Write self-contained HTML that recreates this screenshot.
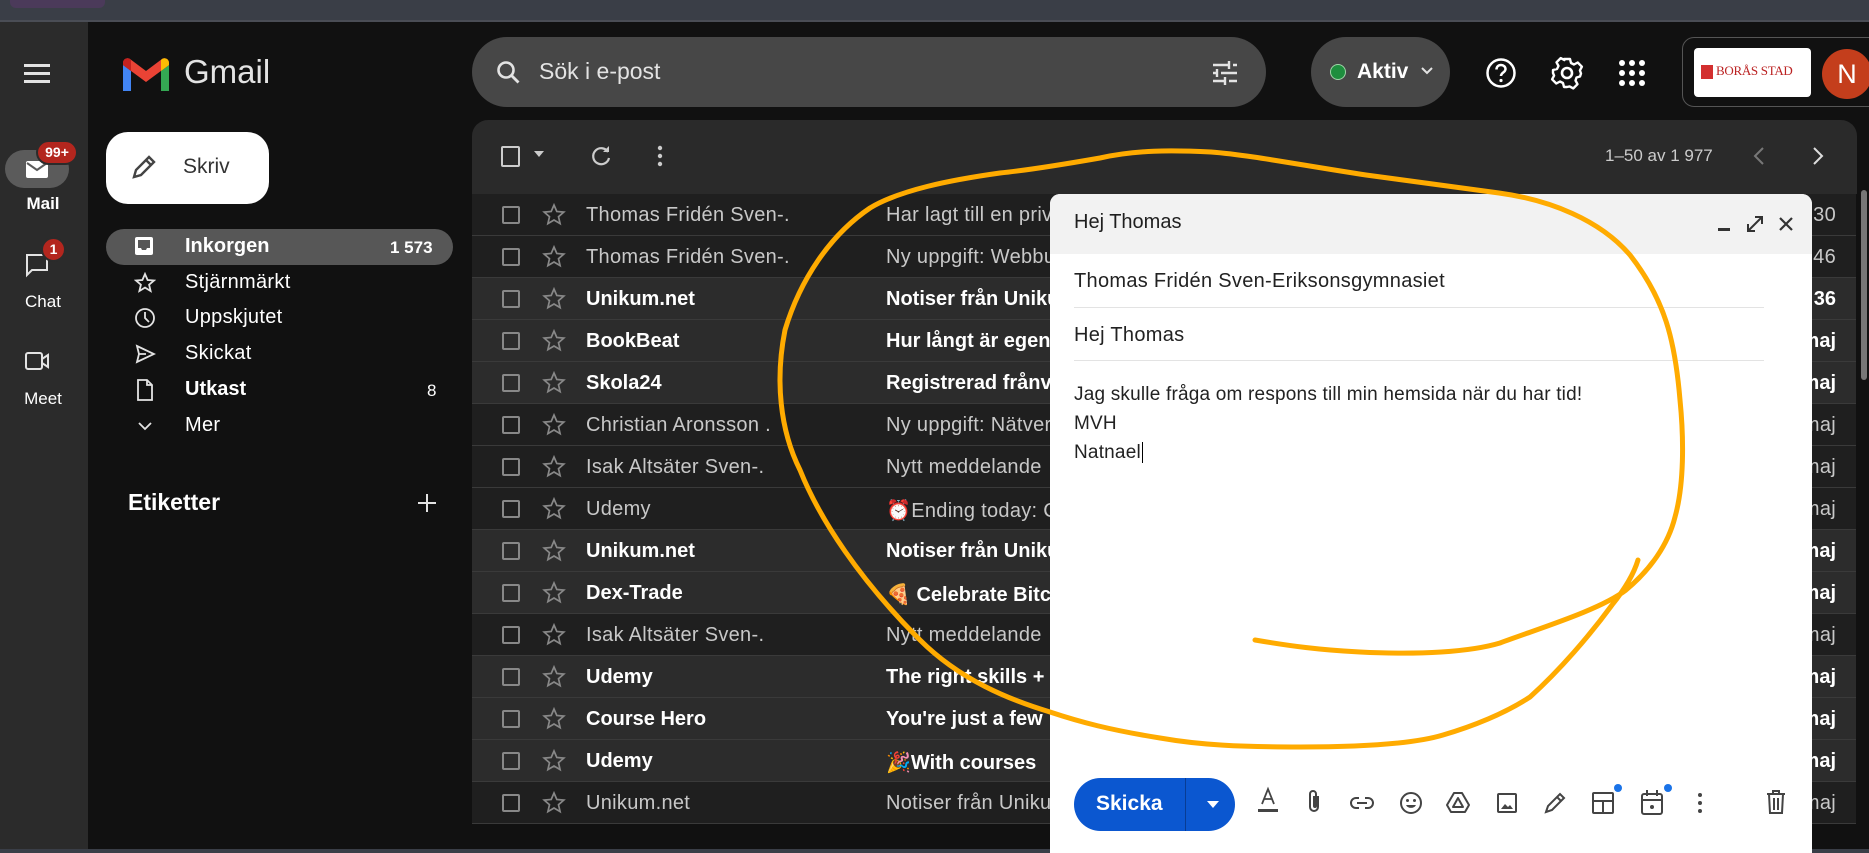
<!DOCTYPE html>
<html><head><meta charset="utf-8"><style>
*{box-sizing:border-box;margin:0;padding:0}
body{width:1869px;height:853px;background:#111;font-family:"Liberation Sans","Noto Sans CJK SC",sans-serif;color:#e3e3e3;position:relative;overflow:hidden}
.a{position:absolute}
.top{left:0;top:0;width:1869px;height:22px;background:#3a3e47;border-bottom:2px solid #4a4d55}
.rail{left:0;top:22px;width:88px;height:831px;background:#2b2b2b}
.rl{width:88px;text-align:center;font-size:17px;color:#fff}
.nav{font-size:20px;color:#fff;left:185px;letter-spacing:0.3px}
.ic{left:134px;width:22px;height:22px}
.row{left:472px;width:1384px;height:42px;border-bottom:1px solid #3a3a3a;font-size:20px;color:#c8c8c8;letter-spacing:0.3px}
.row.u{background:#2c2c2c;color:#fff;font-weight:bold;letter-spacing:0}
.row.r{background:#1f1f1f}
.cb{position:absolute;left:30px;top:12px;width:18px;height:18px;border:2px solid #888;border-radius:2px}
.st{position:absolute;left:70px;top:9px}
.snd{position:absolute;left:114px;top:10px;white-space:nowrap}
.sub{position:absolute;left:414px;top:10px;white-space:nowrap}
.dt{position:absolute;right:20px;top:10px}
.tb svg{position:absolute}
</style></head><body>
<div class="a top"></div>
<div class="a" style="left:10px;top:0;width:95px;height:8px;background:#4b3a5a;border-radius:0 0 6px 6px"></div>
<div class="a rail"></div>
<svg class="a" style="left:24px;top:62px" width="28" height="22"><rect y="2" width="26" height="3" fill="#e3e3e3"/><rect y="10" width="26" height="3" fill="#e3e3e3"/><rect y="18" width="26" height="3" fill="#e3e3e3"/></svg>
<div class="a" style="left:5px;top:150px;width:64px;height:38px;border-radius:19px;background:#5b5b5b"></div>
<svg class="a" style="left:25px;top:160px" width="24" height="20"><rect x="1" y="1" width="22" height="17" rx="2" fill="#fff"/><path d="M2 3l10 7 10-7" stroke="#5b5b5b" stroke-width="2" fill="none"/></svg>
<div class="a" style="left:36px;top:140px;width:42px;height:25px;border-radius:13px;background:#b3261e;border:2px solid #2b2b2b;color:#fff;font-size:14px;font-weight:bold;text-align:center;line-height:21px">99+</div>
<div class="a rl" style="left:-1px;top:194px;font-weight:bold">Mail</div>
<svg class="a" style="left:25px;top:253px" width="26" height="26"><path d="M2 2h20v15H7l-5 5z" fill="none" stroke="#e3e3e3" stroke-width="2"/></svg>
<div class="a" style="left:41px;top:237px;width:25px;height:25px;border-radius:13px;background:#b3261e;border:2px solid #2b2b2b;color:#fff;font-size:14px;font-weight:bold;text-align:center;line-height:21px">1</div>
<div class="a rl" style="left:-1px;top:292px">Chat</div>
<svg class="a" style="left:24px;top:350px" width="28" height="22"><rect x="2" y="3" width="16" height="16" rx="2" fill="none" stroke="#e3e3e3" stroke-width="2"/><path d="M18 9l6-4v12l-6-4" fill="none" stroke="#e3e3e3" stroke-width="2"/></svg>
<div class="a rl" style="left:-1px;top:389px">Meet</div>

<svg class="a" style="left:121px;top:57px" width="50" height="36" viewBox="0 0 50 36"><path d="M2 34h8V14L2 8z" fill="#4285f4"/><path d="M40 34h8V8l-8 6z" fill="#34a853"/><path d="M2 8l23 17L48 8v-2c0-4-4-6-7-4L25 14 9 2C6 0 2 2 2 6z" fill="#ea4335"/><path d="M40 14l8-6V6c0-4-4-6-7-4l-1 1z" fill="#fbbc04"/><path d="M2 8V6c0-4 4-6 7-4l1 1v11z" fill="#c5221f"/></svg>
<div class="a" style="left:184px;top:53px;font-size:33px;color:#e3e3e3">Gmail</div>

<div class="a" style="left:106px;top:132px;width:163px;height:72px;background:#fff;border-radius:22px"></div>
<svg class="a" style="left:129px;top:152px" width="30" height="30"><path d="M5 25l2-7L20 5l5 5L12 23z M17 8l5 5" fill="none" stroke="#444" stroke-width="2.4"/></svg>
<div class="a" style="left:183px;top:155px;font-size:21px;color:#333">Skriv</div>

<div class="a" style="left:106px;top:229px;width:347px;height:36px;background:#575757;border-radius:18px"></div>
<svg class="a ic" style="top:236px"><rect x="1" y="1" width="18" height="18" rx="2" fill="#fff"/><path d="M4 4h12v8h-3l-1 2h-4l-1-2H4z" fill="#575757"/></svg>
<div class="a nav" style="top:235px;font-weight:bold;letter-spacing:0">Inkorgen</div>
<div class="a" style="left:390px;top:238px;font-size:17px;font-weight:bold;color:#fff">1 573</div>
<svg class="a ic" style="top:272px"><path d="M11 2l2.6 6 6.4.5-4.9 4.2 1.5 6.3L11 15.6 5.4 19l1.5-6.3L2 8.5 8.4 8z" fill="none" stroke="#e3e3e3" stroke-width="1.8"/></svg>
<div class="a nav" style="top:271px">Stjärnmärkt</div>
<svg class="a ic" style="top:307px"><circle cx="11" cy="11" r="9" fill="none" stroke="#e3e3e3" stroke-width="1.8"/><path d="M11 5v6l4 4" fill="none" stroke="#e3e3e3" stroke-width="1.8"/></svg>
<div class="a nav" style="top:306px">Uppskjutet</div>
<svg class="a ic" style="top:343px"><path d="M3 3l17 8-17 8 2-8z M5 11h7" fill="none" stroke="#e3e3e3" stroke-width="1.8"/></svg>
<div class="a nav" style="top:342px">Skickat</div>
<svg class="a ic" style="top:379px"><path d="M4 1h9l5 5v15H4z M13 1v5h5" fill="none" stroke="#e3e3e3" stroke-width="1.8"/></svg>
<div class="a nav" style="top:378px;font-weight:bold;letter-spacing:0">Utkast</div>
<div class="a" style="left:427px;top:381px;font-size:17px;color:#fff">8</div>
<svg class="a ic" style="top:415px"><path d="M5 8l6 6 6-6" fill="none" stroke="#e3e3e3" stroke-width="1.8"/></svg>
<div class="a nav" style="top:414px">Mer</div>
<div class="a" style="left:128px;top:489px;font-size:23px;color:#fff;font-weight:bold">Etiketter</div>
<svg class="a" style="left:416px;top:492px" width="22" height="22"><path d="M11 2v18M2 11h18" stroke="#e3e3e3" stroke-width="2"/></svg>

<div class="a" style="left:472px;top:37px;width:794px;height:70px;background:#474747;border-radius:35px"></div>
<svg class="a" style="left:495px;top:59px" width="28" height="28"><circle cx="11" cy="11" r="7.5" fill="none" stroke="#e3e3e3" stroke-width="2.6"/><path d="M16.5 16.5l7 7" stroke="#e3e3e3" stroke-width="2.8"/></svg>
<div class="a" style="left:539px;top:58px;font-size:23px;color:#e3e3e3">Sök i e-post</div>
<svg class="a" style="left:1211px;top:59px" width="28" height="28"><path d="M2 6h16M22 6h4M2 14h4M10 14h16M2 22h12M18 22h8M18 2v8M6 10v8M14 18v8" stroke="#e3e3e3" stroke-width="2.4"/></svg>

<div class="a" style="left:1311px;top:37px;width:139px;height:70px;background:#474747;border-radius:35px"></div>
<div class="a" style="left:1330px;top:64px;width:16px;height:16px;border-radius:50%;background:#1e8e3e;border:1.5px solid #9fd5a8"></div>
<div class="a" style="left:1357px;top:60px;font-size:21px;font-weight:bold;color:#fff">Aktiv</div>
<svg class="a" style="left:1420px;top:66px" width="14" height="10"><path d="M2 2l5 5 5-5" fill="none" stroke="#e3e3e3" stroke-width="2"/></svg>
<svg class="a" style="left:1484px;top:56px" width="34" height="34"><circle cx="17" cy="17" r="13.5" fill="none" stroke="#fff" stroke-width="2.5"/><path d="M12.5 13.5c0-3 2-4.5 4.5-4.5s4.5 1.7 4.5 4c0 3.5-4.5 3.5-4.5 7" fill="none" stroke="#fff" stroke-width="2.5"/><circle cx="17" cy="24.5" r="1.6" fill="#fff"/></svg>
<svg class="a" style="left:1550px;top:56px" width="34" height="34" viewBox="0 0 34 34"><path d="M14 3h6l1 4 3 1.5 3.7-2 4.2 4.2-2 3.7L31 17.5l-1 3-3.5 1 -1 3 2 3.7-4.2 4.2-3.7-2L17 31h-3l-1-4-3-1.5-3.7 2-4.2-4.2 2-3.7L3 17v-3l4-1 1.5-3-2-3.7 4.2-4.2 3.7 2z" fill="none" stroke="#fff" stroke-width="2.4" stroke-linejoin="round"/><circle cx="17" cy="17" r="5" fill="none" stroke="#fff" stroke-width="2.6"/></svg>
<svg class="a" style="left:1618px;top:59px" width="28" height="28"><g fill="#fff"><circle cx="4" cy="4" r="3"/><circle cx="14" cy="4" r="3"/><circle cx="24" cy="4" r="3"/><circle cx="4" cy="14" r="3"/><circle cx="14" cy="14" r="3"/><circle cx="24" cy="14" r="3"/><circle cx="4" cy="24" r="3"/><circle cx="14" cy="24" r="3"/><circle cx="24" cy="24" r="3"/></g></svg>
<div class="a" style="left:1682px;top:37px;width:200px;height:70px;border:1px solid #555;border-radius:12px"></div>
<div class="a" style="left:1694px;top:48px;width:117px;height:49px;background:#fff;border-radius:4px"></div>
<div class="a" style="left:1701px;top:65px;width:12px;height:14px;background:#d32f2f"></div>
<div class="a" style="left:1716px;top:63px;font-family:'Liberation Serif',serif;font-size:13px;color:#b22;letter-spacing:-0.3px">BORÅS STAD</div>
<div class="a" style="left:1822px;top:49px;width:50px;height:50px;border-radius:50%;background:#c43e1c;color:#fff;font-size:27px;text-align:center;line-height:50px">N</div>

<div class="a" style="left:472px;top:120px;width:1385px;height:74px;background:#2a2a2a;border-radius:16px 16px 0 0"></div>
<div class="a" style="left:501px;top:146px;width:19px;height:21px;border:2px solid #ccc;border-radius:2px"></div>
<svg class="a" style="left:533px;top:150px" width="12" height="8"><path d="M1 1h10l-5 6z" fill="#ccc"/></svg>
<svg class="a" style="left:588px;top:143px" width="26" height="26"><path d="M20 9a8 8 0 1 0 1 6" fill="none" stroke="#ccc" stroke-width="2.2"/><path d="M15 9h6V3z" fill="#ccc"/></svg>
<svg class="a" style="left:656px;top:145px" width="8" height="22"><circle cx="4" cy="3" r="2.2" fill="#ccc"/><circle cx="4" cy="11" r="2.2" fill="#ccc"/><circle cx="4" cy="19" r="2.2" fill="#ccc"/></svg>
<div class="a" style="left:1605px;top:146px;font-size:17px;color:#ccc">1–50 av 1 977</div>
<svg class="a" style="left:1752px;top:146px" width="14" height="20"><path d="M11 2L3 10l8 8" fill="none" stroke="#777" stroke-width="2"/></svg>
<svg class="a" style="left:1811px;top:146px" width="14" height="20"><path d="M3 2l8 8-8 8" fill="none" stroke="#ddd" stroke-width="2"/></svg>
<div class="a" style="left:1861px;top:190px;width:6px;height:190px;background:#777;border-radius:3px"></div>

<div class="a" style="left:0;top:194px">
<div class="a row r" style="top:0px"><div class="cb"></div><svg class="st" width="24" height="24"><path d="M12 2l2.8 6.5 7 .6-5.3 4.6 1.6 6.9L12 17l-6.1 3.6 1.6-6.9L2.2 9.1l7-.6z" fill="none" stroke="#888" stroke-width="1.7"/></svg><span class="snd">Thomas Fridén Sven-.</span><span class="sub">Har lagt till en privat kommentar</span><span class="dt">30</span></div>
<div class="a row r" style="top:42px"><div class="cb"></div><svg class="st" width="24" height="24"><path d="M12 2l2.8 6.5 7 .6-5.3 4.6 1.6 6.9L12 17l-6.1 3.6 1.6-6.9L2.2 9.1l7-.6z" fill="none" stroke="#888" stroke-width="1.7"/></svg><span class="snd">Thomas Fridén Sven-.</span><span class="sub">Ny uppgift: Webbutveckling</span><span class="dt">46</span></div>
<div class="a row u" style="top:84px"><div class="cb"></div><svg class="st" width="24" height="24"><path d="M12 2l2.8 6.5 7 .6-5.3 4.6 1.6 6.9L12 17l-6.1 3.6 1.6-6.9L2.2 9.1l7-.6z" fill="none" stroke="#888" stroke-width="1.7"/></svg><span class="snd">Unikum.net</span><span class="sub">Notiser från Unikum</span><span class="dt">36</span></div>
<div class="a row u" style="top:126px"><div class="cb"></div><svg class="st" width="24" height="24"><path d="M12 2l2.8 6.5 7 .6-5.3 4.6 1.6 6.9L12 17l-6.1 3.6 1.6-6.9L2.2 9.1l7-.6z" fill="none" stroke="#888" stroke-width="1.7"/></svg><span class="snd">BookBeat</span><span class="sub">Hur långt är egentligen</span><span class="dt">maj</span></div>
<div class="a row u" style="top:168px"><div class="cb"></div><svg class="st" width="24" height="24"><path d="M12 2l2.8 6.5 7 .6-5.3 4.6 1.6 6.9L12 17l-6.1 3.6 1.6-6.9L2.2 9.1l7-.6z" fill="none" stroke="#888" stroke-width="1.7"/></svg><span class="snd">Skola24</span><span class="sub">Registrerad frånvaro</span><span class="dt">maj</span></div>
<div class="a row r" style="top:210px"><div class="cb"></div><svg class="st" width="24" height="24"><path d="M12 2l2.8 6.5 7 .6-5.3 4.6 1.6 6.9L12 17l-6.1 3.6 1.6-6.9L2.2 9.1l7-.6z" fill="none" stroke="#888" stroke-width="1.7"/></svg><span class="snd">Christian Aronsson .</span><span class="sub">Ny uppgift: Nätverk</span><span class="dt">maj</span></div>
<div class="a row r" style="top:252px"><div class="cb"></div><svg class="st" width="24" height="24"><path d="M12 2l2.8 6.5 7 .6-5.3 4.6 1.6 6.9L12 17l-6.1 3.6 1.6-6.9L2.2 9.1l7-.6z" fill="none" stroke="#888" stroke-width="1.7"/></svg><span class="snd">Isak Altsäter Sven-.</span><span class="sub">Nytt meddelande</span><span class="dt">maj</span></div>
<div class="a row r" style="top:294px"><div class="cb"></div><svg class="st" width="24" height="24"><path d="M12 2l2.8 6.5 7 .6-5.3 4.6 1.6 6.9L12 17l-6.1 3.6 1.6-6.9L2.2 9.1l7-.6z" fill="none" stroke="#888" stroke-width="1.7"/></svg><span class="snd">Udemy</span><span class="sub">⏰Ending today: Courses</span><span class="dt">maj</span></div>
<div class="a row u" style="top:336px"><div class="cb"></div><svg class="st" width="24" height="24"><path d="M12 2l2.8 6.5 7 .6-5.3 4.6 1.6 6.9L12 17l-6.1 3.6 1.6-6.9L2.2 9.1l7-.6z" fill="none" stroke="#888" stroke-width="1.7"/></svg><span class="snd">Unikum.net</span><span class="sub">Notiser från Unikum</span><span class="dt">maj</span></div>
<div class="a row u" style="top:378px"><div class="cb"></div><svg class="st" width="24" height="24"><path d="M12 2l2.8 6.5 7 .6-5.3 4.6 1.6 6.9L12 17l-6.1 3.6 1.6-6.9L2.2 9.1l7-.6z" fill="none" stroke="#888" stroke-width="1.7"/></svg><span class="snd">Dex-Trade</span><span class="sub">🍕 Celebrate Bitcoin</span><span class="dt">maj</span></div>
<div class="a row r" style="top:420px"><div class="cb"></div><svg class="st" width="24" height="24"><path d="M12 2l2.8 6.5 7 .6-5.3 4.6 1.6 6.9L12 17l-6.1 3.6 1.6-6.9L2.2 9.1l7-.6z" fill="none" stroke="#888" stroke-width="1.7"/></svg><span class="snd">Isak Altsäter Sven-.</span><span class="sub">Nytt meddelande</span><span class="dt">maj</span></div>
<div class="a row u" style="top:462px"><div class="cb"></div><svg class="st" width="24" height="24"><path d="M12 2l2.8 6.5 7 .6-5.3 4.6 1.6 6.9L12 17l-6.1 3.6 1.6-6.9L2.2 9.1l7-.6z" fill="none" stroke="#888" stroke-width="1.7"/></svg><span class="snd">Udemy</span><span class="sub">The right skills +</span><span class="dt">maj</span></div>
<div class="a row u" style="top:504px"><div class="cb"></div><svg class="st" width="24" height="24"><path d="M12 2l2.8 6.5 7 .6-5.3 4.6 1.6 6.9L12 17l-6.1 3.6 1.6-6.9L2.2 9.1l7-.6z" fill="none" stroke="#888" stroke-width="1.7"/></svg><span class="snd">Course Hero</span><span class="sub">You're just a few</span><span class="dt">maj</span></div>
<div class="a row u" style="top:546px"><div class="cb"></div><svg class="st" width="24" height="24"><path d="M12 2l2.8 6.5 7 .6-5.3 4.6 1.6 6.9L12 17l-6.1 3.6 1.6-6.9L2.2 9.1l7-.6z" fill="none" stroke="#888" stroke-width="1.7"/></svg><span class="snd">Udemy</span><span class="sub">🎉With courses</span><span class="dt">maj</span></div>
<div class="a row r" style="top:588px"><div class="cb"></div><svg class="st" width="24" height="24"><path d="M12 2l2.8 6.5 7 .6-5.3 4.6 1.6 6.9L12 17l-6.1 3.6 1.6-6.9L2.2 9.1l7-.6z" fill="none" stroke="#888" stroke-width="1.7"/></svg><span class="snd">Unikum.net</span><span class="sub">Notiser från Unikum</span><span class="dt">maj</span></div>
</div>
<div class="a" style="left:0;top:849px;width:1869px;height:4px;background:#3a3e47"></div>

<div class="a" style="left:1050px;top:194px;width:762px;height:659px;background:#fff;border-radius:10px 10px 0 0;overflow:hidden">
  <div class="a" style="left:0;top:0;width:762px;height:60px;background:#f2f2f2"></div>
  <div class="a" style="left:24px;top:17px;font-size:20px;color:#1f1f1f">Hej Thomas</div>
  <div class="a" style="left:668px;top:34px;width:12px;height:3px;background:#333"></div>
  <svg class="a" style="left:695px;top:20px" width="20" height="20"><path d="M3 17L17 3M10 3h7v7M3 10v7h7" fill="none" stroke="#333" stroke-width="2"/></svg>
  <svg class="a" style="left:727px;top:21px" width="18" height="18"><path d="M3 3l12 12M15 3L3 15" stroke="#333" stroke-width="2.2"/></svg>
  <div class="a" style="left:24px;top:76px;font-size:20px;color:#222;letter-spacing:0.3px">Thomas Fridén Sven-Eriksonsgymnasiet</div>
  <div class="a" style="left:24px;top:113px;width:690px;height:1px;background:#e3e3e3"></div>
  <div class="a" style="left:24px;top:130px;font-size:20px;color:#222;letter-spacing:0.3px">Hej Thomas</div>
  <div class="a" style="left:24px;top:166px;width:690px;height:1px;background:#e3e3e3"></div>
  <div class="a" style="left:24px;top:186px;font-size:19px;color:#222;line-height:29px;letter-spacing:0.2px">Jag skulle fråga om respons till min hemsida när du har tid!<br>MVH<br>Natnael<span style="border-left:1px solid #000;margin-left:1px"></span></div>
  <div class="a" style="left:24px;top:584px;width:161px;height:53px;background:#0b57d0;border-radius:27px"></div>
  <div class="a" style="left:135px;top:584px;width:1px;height:53px;background:#083c94"></div>
  <div class="a" style="left:46px;top:598px;font-size:21px;font-weight:bold;color:#fff">Skicka</div>
  <svg class="a" style="left:156px;top:606px" width="14" height="10"><path d="M1 1h12L7 8z" fill="#fff"/></svg>
  <div class="tb">
  <svg style="left:206px;top:592px" width="24" height="30"><path d="M6 18L12 3l6 15M8 13h8" fill="none" stroke="#444" stroke-width="1.8"/><rect x="2" y="23" width="20" height="3" fill="#444"/></svg>
  <svg style="left:255px;top:595px" width="18" height="26"><path d="M13 7v11a4 4 0 0 1-8 0V5a3 3 0 0 1 6 0v12a1 1 0 0 1-2 0V7" fill="none" stroke="#444" stroke-width="2"/></svg>
  <svg style="left:299px;top:601px" width="26" height="16"><path d="M10 3H7a5 5 0 0 0 0 10h3M16 3h3a5 5 0 0 1 0 10h-3M8 8h10" fill="none" stroke="#444" stroke-width="2"/></svg>
  <svg style="left:348px;top:596px" width="26" height="26"><circle cx="13" cy="13" r="10" fill="none" stroke="#444" stroke-width="2"/><circle cx="9.5" cy="10.5" r="1.5" fill="#444"/><circle cx="16.5" cy="10.5" r="1.5" fill="#444"/><path d="M8 15a5.5 5 0 0 0 10 0z" fill="#444"/></svg>
  <svg style="left:395px;top:596px" width="26" height="26"><path d="M9 3h8l7 12-4 7H6l-4-7z M13 8l-5 9h10z" fill="none" stroke="#444" stroke-width="2" stroke-linejoin="round"/></svg>
  <svg style="left:445px;top:597px" width="24" height="24"><rect x="3" y="3" width="18" height="18" rx="1" fill="none" stroke="#444" stroke-width="2"/><path d="M6 18l4-5 3 3 2-2 3 4z" fill="#444"/></svg>
  <svg style="left:492px;top:596px" width="26" height="26"><path d="M4 22l2-6L18 4l4 4L10 20z M15 7l4 4" fill="none" stroke="#444" stroke-width="2"/></svg>
  <svg style="left:540px;top:596px" width="26" height="26"><rect x="3" y="3" width="20" height="20" rx="1" fill="none" stroke="#444" stroke-width="2"/><path d="M3 11h20M13 11v12" stroke="#444" stroke-width="2"/></svg>
  <div class="a" style="left:564px;top:590px;width:8px;height:8px;border-radius:50%;background:#1a73e8"></div>
  <svg style="left:589px;top:594px" width="26" height="30"><rect x="3" y="6" width="20" height="20" rx="2" fill="none" stroke="#444" stroke-width="2"/><path d="M8 2v6M18 2v6M3 12h20" stroke="#444" stroke-width="2"/><circle cx="13" cy="19" r="2" fill="#444"/></svg>
  <div class="a" style="left:614px;top:590px;width:8px;height:8px;border-radius:50%;background:#1a73e8"></div>
  <svg style="left:646px;top:598px" width="8" height="22"><circle cx="4" cy="3" r="2" fill="#444"/><circle cx="4" cy="11" r="2" fill="#444"/><circle cx="4" cy="19" r="2" fill="#444"/></svg>
  <svg style="left:715px;top:595px" width="22" height="26"><path d="M2 5h18M8 5V2h6v3M4 5l1 19h12l1-19M9 9v12M13 9v12" fill="none" stroke="#444" stroke-width="2"/></svg>
  </div>
</div>

<svg class="a" style="left:0;top:0" width="1869" height="853"><path d="M1255 640 C1290 646 1320 650 1360 652 C1420 655 1470 652 1500 643 C1540 628 1600 610 1626 590 C1650 570 1668 545 1675 517 C1684 485 1684 440 1680 400 C1675 340 1665 300 1630 255 C1600 220 1550 200 1499 193 C1440 185 1400 180 1366 175 C1300 165 1250 155 1211 152 C1170 150 1136 150 1100 158 C1060 165 1030 170 1000 173 C950 180 900 190 870 208 C830 235 800 280 785 330 C775 380 780 430 800 470 C820 520 860 580 920 640 C960 680 1010 700 1050 712 C1080 722 1110 730 1160 738 C1200 745 1240 747 1300 747 C1377 747 1420 742 1443 735 C1480 724 1510 710 1530 697 C1560 670 1590 635 1612 605 C1628 585 1635 570 1638 560" fill="none" stroke="#ffab00" stroke-width="5" stroke-linecap="round" stroke-linejoin="round"/></svg>
</body></html>
